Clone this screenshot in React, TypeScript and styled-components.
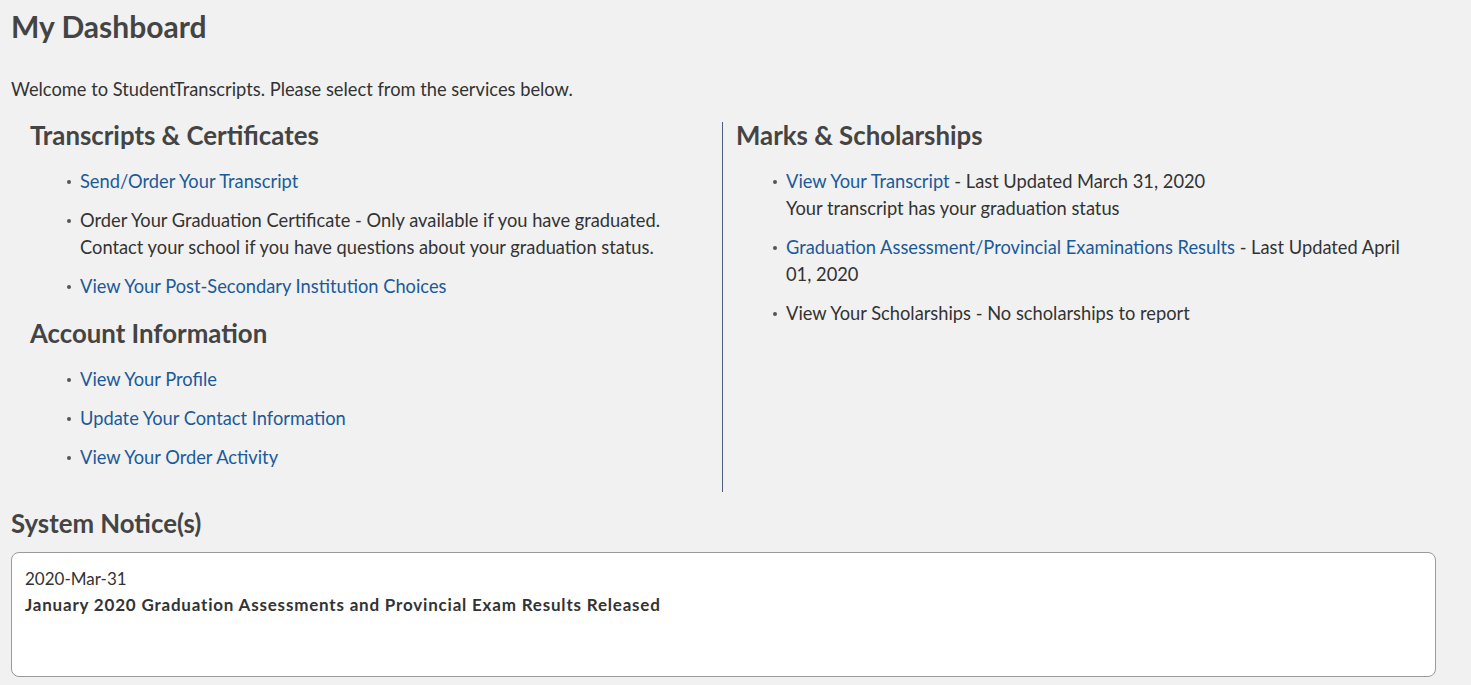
import styled, { createGlobalStyle } from "styled-components";

const GlobalStyle = createGlobalStyle`
  html, body {
    margin: 0;
    padding: 0;
    background: #f1f1f1;
  }
  body {
    font-family: Lato, "Open Sans", sans-serif;
    color: #333;
  }
`;

const Page = styled.div`
  padding: 0 35px 8px 11px;
`;

const PageTitle = styled.h1`
  margin: 9px 0 0;
  font-size: 30px;
  line-height: 34px;
  font-weight: 700;
  color: #444;
`;

const Intro = styled.p`
  margin: 34px 0 0;
  font-size: 18.3px;
  line-height: 24px;
`;

const Columns = styled.div`
  display: grid;
  grid-template-columns: 711px 1fr;
  margin-top: 21px;
`;

const Column = styled.div<{ $divider?: boolean }>`
  padding-left: ${(p) => (p.$divider ? "13px" : "19px")};
  padding-right: ${(p) => (p.$divider ? "24px" : "0")};
  padding-bottom: 21px;
  border-left: ${(p) => (p.$divider ? "1px solid #4a5f7e" : "none")};
`;

const SectionTitle = styled.h2`
  margin: 0 0 20px;
  font-size: 25.8px;
  line-height: 26px;
  font-weight: 700;
  color: #444;
`;

const List = styled.ul`
  list-style: none;
  margin: 0 0 20px;
  padding: 0 0 0 50px;
  display: flex;
  flex-direction: column;
  gap: 12px;

  &:last-child {
    margin-bottom: 0;
  }
`;

const Item = styled.li`
  position: relative;
  font-size: 18.3px;
  line-height: 27px;

  &::before {
    content: "";
    position: absolute;
    left: -13px;
    top: 12px;
    width: 4px;
    height: 4px;
    border-radius: 50%;
    background: #555;
  }
`;

const ItemLink = styled.a`
  color: #1b5a99;
  text-decoration: none;
  cursor: pointer;
`;

const NoticeTitle = styled(SectionTitle)`
  margin: 18px 0 16px;
`;

const NoticeBox = styled.div`
  height: 125px;
  box-sizing: border-box;
  padding: 13px 13px;
  background: #fff;
  border: 1px solid #9a9a9a;
  border-radius: 8px;
  font-size: 17px;
  line-height: 26px;
`;

const NoticeHeadline = styled.div`
  font-weight: 700;
  letter-spacing: 0.8px;
  color: #333;
`;

export default function App() {
  return (
    <>
      <GlobalStyle />
      <Page>
        <PageTitle>My Dashboard</PageTitle>
        <Intro>Welcome to StudentTranscripts. Please select from the services below.</Intro>
        <Columns>
          <Column>
            <SectionTitle>Transcripts &amp; Certificates</SectionTitle>
            <List>
              <Item>
                <ItemLink>Send/Order Your Transcript</ItemLink>
              </Item>
              <Item>
                Order Your Graduation Certificate - Only available if you have graduated.
                <br />
                Contact your school if you have questions about your graduation status.
              </Item>
              <Item>
                <ItemLink>View Your Post-Secondary Institution Choices</ItemLink>
              </Item>
            </List>
            <SectionTitle>Account Information</SectionTitle>
            <List>
              <Item>
                <ItemLink>View Your Profile</ItemLink>
              </Item>
              <Item>
                <ItemLink>Update Your Contact Information</ItemLink>
              </Item>
              <Item>
                <ItemLink>View Your Order Activity</ItemLink>
              </Item>
            </List>
          </Column>
          <Column $divider>
            <SectionTitle>Marks &amp; Scholarships</SectionTitle>
            <List>
              <Item>
                <ItemLink>View Your Transcript</ItemLink> - Last Updated March 31, 2020
                <br />
                Your transcript has your graduation status
              </Item>
              <Item>
                <ItemLink>Graduation Assessment/Provincial Examinations Results</ItemLink> - Last
                Updated April 01, 2020
              </Item>
              <Item>View Your Scholarships - No scholarships to report</Item>
            </List>
          </Column>
        </Columns>
        <NoticeTitle>System Notice(s)</NoticeTitle>
        <NoticeBox>
          <div>2020-Mar-31</div>
          <NoticeHeadline>January 2020 Graduation Assessments and Provincial Exam Results Released</NoticeHeadline>
        </NoticeBox>
      </Page>
    </>
  );
}
